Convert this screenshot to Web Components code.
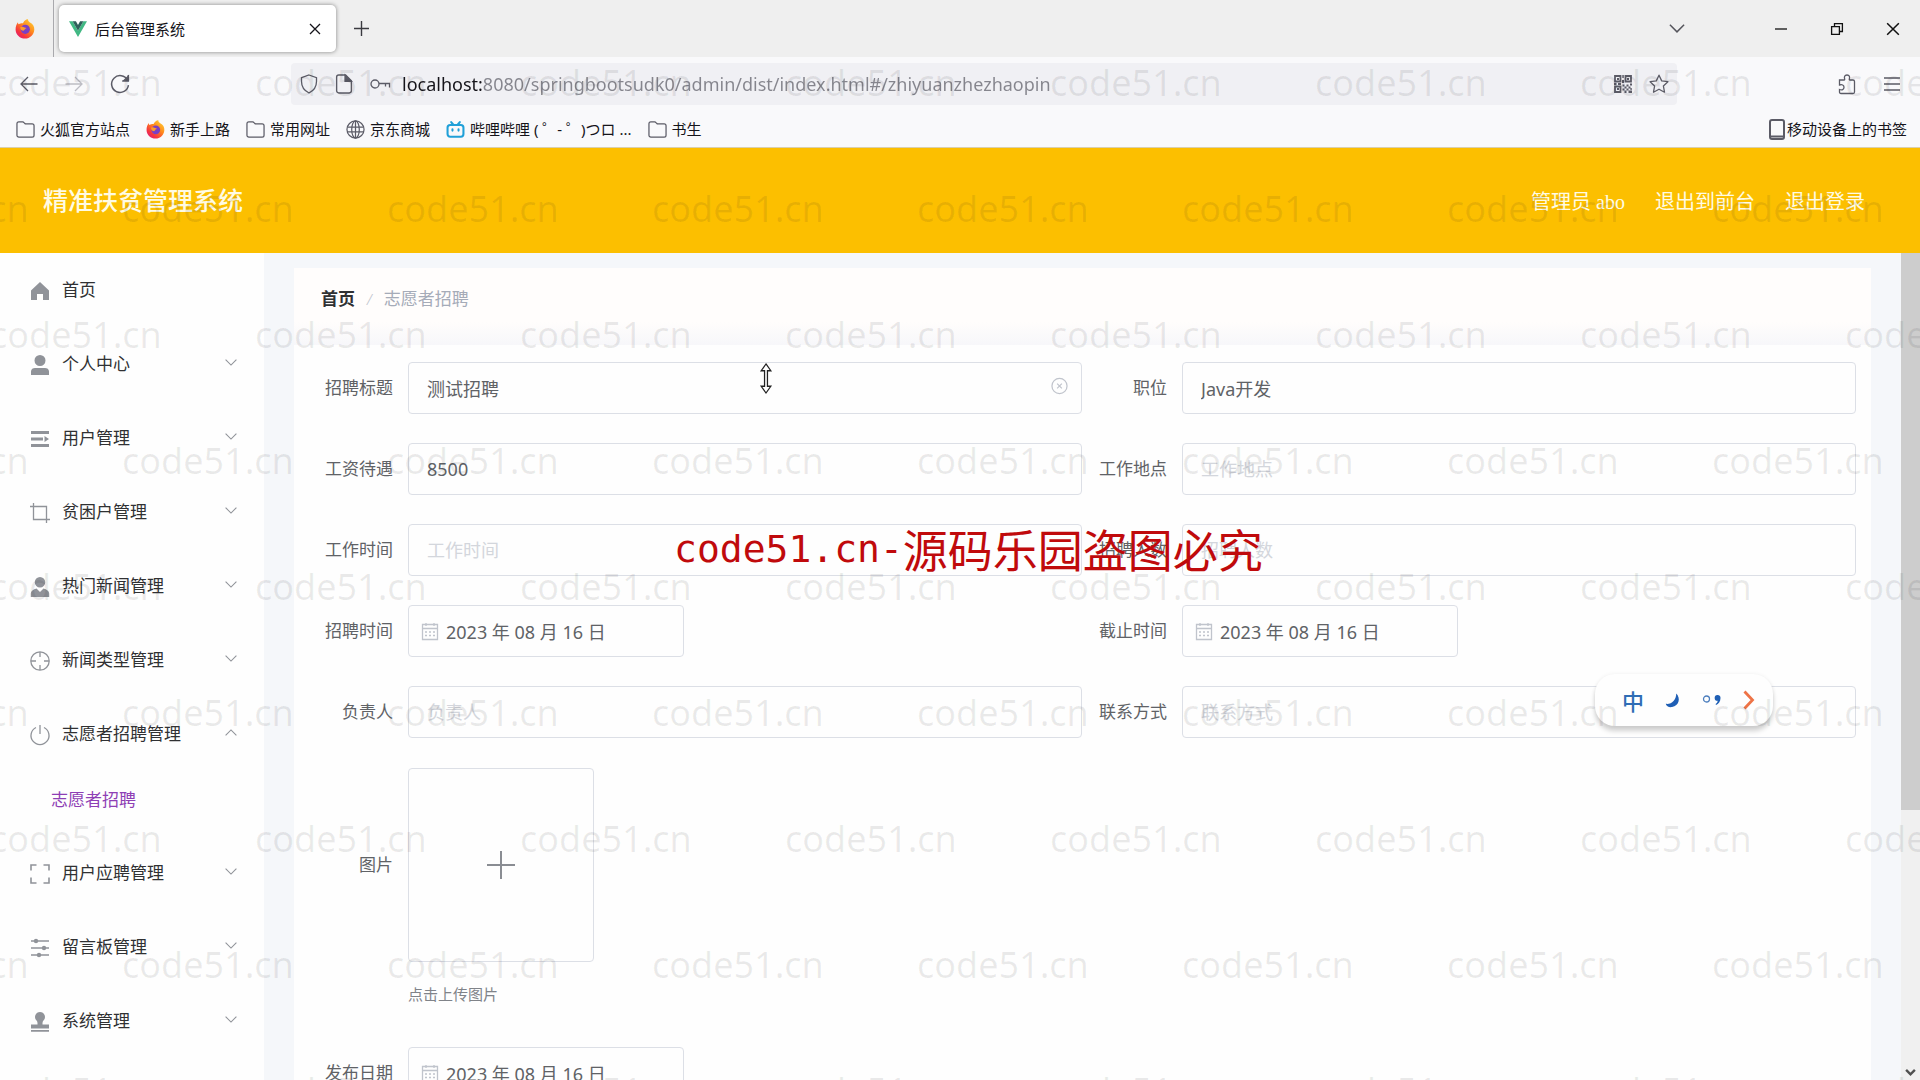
<!DOCTYPE html>
<html lang="zh-CN">
<head>
<meta charset="utf-8">
<title>后台管理系统</title>
<style>
  html, body { margin: 0; height: 100%; }
  body { overflow: hidden; font-family: "Liberation Serif", "Noto Sans CJK SC", serif; }
</style>
</head>
<body>
<app-window></app-window>

<script>
const UI = '"Noto Sans", "Noto Sans CJK SC", sans-serif';

const ICONS = {
  firefox: ['0 0 20 20', '<defs><linearGradient id="a" x1="1" y1="0" x2="0.2" y2="1"><stop offset="0" stop-color="#ffe03a"/><stop offset=".45" stop-color="#ff8a1c"/><stop offset=".8" stop-color="#f5333f"/><stop offset="1" stop-color="#e01e78"/></linearGradient></defs><g stroke="none"><path fill="url(#a)" d="M10 1.500c1-.9 2-1.300 3-1.200 0 1.500.6 2.100 2 3.200C18 5 19.500 7.500 19.300 10.800 19 15.800 15 19.600 10 19.600S.7 15.700.6 10.700C.5 7.500 1.500 5 3 3.200c0 1 .2 1.500.6 2C5.500 4.300 6.500 4 8 4.200 8.500 3 9 2.300 10 1.500z"/><circle cx="10.300" cy="10.300" r="4.600" fill="#7a3fc4"/><path fill="#ff9a2a" d="M5.500 8c1.200-.6 2.800-.4 4 .5 1 .1 1.600.4 2 1-1 .1-1.700.5-2 1.200-.3.900-1.200 1.200-2.300.900C5.700 11 5 9.500 5.500 8z"/></g>'],
  vue: ['0 0 20 18', '<g stroke="none"><path fill="#41b883" d="M0 .5h4L10 11 16 .5h4L10 17.800z"/><path fill="#2f5f5a" d="M4 .5h3.700L10 4.500 12.300.5H16L10 11z"/></g>'],
  close: ['0 0 12 12', '<path d="M1 1l10 10M11 1L1 11"/>'],
  plus: ['0 0 14 14', '<path d="M7 0v14M0 7h14"/>'],
  down: ['0 0 14 8', '<path d="M.7.7L7 7l6.300-6.300"/>'],
  up: ['0 0 14 8', '<path d="M.7 7.300L7 1l6.300 6.300"/>'],
  min: ['0 0 12 12', '<path d="M0 6h12"/>'],
  restore: ['0 0 12 12', '<path d="M.6 3.600h7.800v7.800H.6zM3.500 3.500V.6h7.900v7.900H8.500"/>'],
  back: ['0 0 18 16', '<path d="M17.500 8H1.500M8 1L1 8l7 7"/>'],
  forward: ['0 0 18 16', '<path d="M.5 8h16M10 1l7 7-7 7"/>'],
  reload: ['0 0 18 18', '<path d="M15.800 5.500A7.600 7.600 0 1 0 16.600 10M16.500.8v5.400h-5.400"/><path d="M16.500 2v4.200h-4.200z" fill="currentColor"/>'],
  shield: ['0 0 18 20', '<path d="M9 1l7.500 2.700v3.800C16.500 12.500 14 16.500 9 19 4 16.500 1.500 12.500 1.500 7.500V3.700z"/>'],
  page: ['0 0 16 19', '<path d="M3 1h6.500L15 6.500V16a2 2 0 0 1-2 2H3a2 2 0 0 1-2-2V3a2 2 0 0 1 2-2z"/><path d="M9 1v6h6z" fill="currentColor"/>'],
  key: ['0 0 20 12', '<circle cx="5" cy="6" r="4"/><path d="M9 5.500h10.500v4M15.500 5.500v3"/>'],
  qr: ['0 0 18 18', '<path stroke-width="1.800" d="M1 1h5.500v5.500H1zM11.500 1H17v5.500h-5.500zM1 11.500h5.500V17H1z"/><path fill="currentColor" stroke="none" d="M3 3h2v2H3zM13 3h2v2h-2zM3 13h2v2H3zM8.300 0h1.500v3H8.300zM8 5h2v3H8zM0 8h2.500v2H0zM4 8h3v2H4zM8.500 9.500h2v2h-2zM10.500 11.500h2v2h-2zM12.500 9.500h2v2h-2zM14.500 11.500h2v2h-2zM16 8.500h2v2h-2zM8.500 13.500h2v2h-2zM12.500 13.500h2v2h-2zM10.500 15.500h2V18h-2zM14.500 15.500h3.500V18h-3.500zM16.200 13.200H18v1.500h-1.800z"/>'],
  star: ['0 0 20 20', '<path stroke-linejoin="round" d="M10 1.200l2.700 5.700 6.200.8-4.500 4.300 1.100 6.200-5.500-3-5.500 3 1.100-6.200L1.100 7.700l6.200-.8z"/>'],
  puzzle: ['0 0 18 21', '<path d="M1.500 6h4.700c.4 0 .6-.4.500-.8C6 3 6.500 1 9 1s3 2 2.300 4.200c-.1.400.1.800.5.800H15c1 0 1.500.5 1.500 1.500V18c0 1-.5 1.500-1.500 1.500H3c-1 0-1.500-.5-1.500-1.500v-2.500c2.500.8 4.500.2 4.500-2.200s-2-3-4.500-2.300z"/>'],
  menu: ['0 0 16 14', '<path d="M0 1h16M0 7h16M0 13h16"/>'],
  folder: ['0 0 20 18', '<path d="M3 1h4c.7 0 1 .2 1.400.7L9.700 3H17a2 2 0 0 1 2 2v10a2 2 0 0 1-2 2H3a2 2 0 0 1-2-2V3a2 2 0 0 1 2-2z"/>'],
  globe: ['0 0 20 20', '<circle cx="10" cy="10" r="9"/><ellipse cx="10" cy="10" rx="4" ry="9"/><path d="M1.500 7.500h17M1.500 12.500h17M10 1v18"/>'],
  bili: ['0 0 22 20', '<g stroke="#20a0d8" stroke-width="2.400" stroke-linecap="round"><rect x="1.800" y="4.800" width="18.400" height="13.500" rx="3"/><path d="M6 1.500l2.500 3M16 1.500l-2.500 3M7.500 9.800v1.500M14.500 9.800v1.500"/></g>'],
  phone: ['0 0 16 21', '<rect x="1" y="1" width="14" height="19" rx="2" stroke-width="2"/><path stroke-width="2" d="M1 17.500h14"/>'],
  home: ['0 0 20 20', '<path fill="currentColor" stroke="none" d="M10 1L1 9.500V19h6v-6h6v6h6V9.500z"/>'],
  user: ['0 0 20 20', '<path fill="currentColor" stroke="none" d="M10 0a5.500 5.500 0 1 1 0 11 5.500 5.500 0 0 1 0-11zM1 20v-3.500C1 14 3 13 5 13h10c2 0 4 1 4 3.500V20z"/>'],
  fold: ['0 0 20 18', '<path fill="currentColor" stroke="none" d="M1 1h18v3H1zM1 7.500h12v3H1zM1 14h18v3H1zM14.500 6l4.500 3-4.500 3z"/>'],
  crop: ['0 0 20 20', '<path d="M0 3.500h16.500V20M3.500 0v16.500H20"/>'],
  suit: ['0 0 20 20', '<path fill="currentColor" stroke="none" d="M10 0a5.200 5.200 0 1 1 0 10.500A5.200 5.200 0 0 1 10 0zM.8 20v-3.500c0-2.500 2.500-4 5.700-5L10 15l3.500-3.500c3.200 1 5.700 2.500 5.700 5V20z"/>'],
  aim: ['0 0 20 20', '<circle cx="10" cy="10" r="9.200"/><path d="M10 1v5M10 14v5M1 10h5M14 10h5"/>'],
  power: ['0 0 20 20', '<path d="M6 2.500a9 9 0 1 0 8 0M10 0v9"/>'],
  full: ['0 0 20 20', '<path stroke-width="1.600" d="M1 6.500V1h5.500M13.500 1H19v5.500M19 13.500V19h-5.500M6.500 19H1v-5.500"/>'],
  sliders: ['0 0 20 20', '<path stroke-width="1.500" d="M1 3h18M1 10h18M1 17h18"/><g fill="currentColor" stroke="none"><circle cx="6" cy="3" r="2.200"/><circle cx="14" cy="10" r="2.200"/><circle cx="9" cy="17" r="2.200"/></g>'],
  stamp: ['0 0 20 20', '<path fill="currentColor" stroke="none" d="M10 0a5 5 0 0 1 3.500 8.500c-1 1-1 2-1 4H19v4H1v-4h6.500c0-2 0-3-1-4A5 5 0 0 1 10 0zM1 18h18v1.800H1z"/>'],
  calendar: ['0 0 16 17', '<path d="M.5 1.500h15v15H.5zM.5 5.500h15M4 0v3M12 0v3"/><path stroke-dasharray="2 2" d="M3 9h10M3 12.500h10"/>'],
  clear: ['0 0 18 18', '<circle cx="9" cy="9" r="8"/><path d="M6.500 6.500l5 5M11.500 6.500l-5 5"/>'],
  bigplus: ['0 0 28 28', '<path stroke-width="2" d="M14 0v28M0 14h28"/>'],
  moon: ['0 0 16 16', '<path fill="#1f5fb5" stroke="none" d="M12 .5c5 5 3 13-4.500 14.500C4 15.500 1.500 14 .8 11.500 6.500 12.500 12 8 12 .5z"/>'],
  punct: ['0 0 20 12', '<circle cx="4.500" cy="5" r="3" stroke="#4d7fbe"/><path fill="#1f5fb5" stroke="none" d="M15.500 1a2.800 2.800 0 0 1 3 3c0 3.500-2 6-4.500 7l-.4-1c1.500-.8 2-2 2-3.200A2.800 2.800 0 0 1 15.500 1z"/>'],
  next: ['0 0 12 20', '<path stroke="#ee7346" stroke-width="2.800" d="M1.500 1.500L9.500 10l-8 8.500"/>'],
  resize: ['0 0 14 32', '<path fill="#fff" stroke="#222" d="M7 1l5 7H8.500v16H12l-5 7-5-7h3.500V8H2z"/>'],
  scrolldown: ['0 0 12 8', '<path stroke-width="2.800" d="M1 1l5 5 5-5"/>']
};

function define(name, css, html) {
  customElements.define(name, class extends HTMLElement {
    constructor() {
      super();
      const body = typeof html === 'function' ? html(this) : html;
      this.attachShadow({ mode: 'open' }).innerHTML = `<style>*{box-sizing:border-box}${css}</style>${body}`;
    }
  });
}

define('ui-icon', `
  :host { display: inline-flex; flex: none; width: 18px; height: 18px; align-items: center; justify-content: center; }
  svg { width: 100%; height: 100%; overflow: visible; fill: none; stroke: currentColor; stroke-width: 1.3px; }
`, el => {
  const [box, art] = ICONS[el.getAttribute('name')];
  return `<svg viewBox="${box}" aria-hidden="true">${art}</svg>`;
});

define('tab-strip', `
  :host { display: flex; align-items: center; height: 57px; background: #efefef; color: #3a3a40; font: 15px/20px ${UI}; }
  button { border: 0; padding: 0; background: none; color: inherit; display: flex; align-items: center; justify-content: center; }
  .home { width: 54px; height: 100%; padding-right: 4px; display: flex; align-items: center; justify-content: center; border-right: 1px solid #a9a9ad; }
  .home ui-icon { width: 20px; height: 20px; }
  .tab { display: flex; align-items: center; gap: 8px; width: 277px; height: 47px; margin-left: 5px; padding: 0 14px 0 10px; background: #fff; border-radius: 5px; box-shadow: 0 0 4px rgba(0,0,0,.45); color: #15141a; }
  .tab span { flex: 1; }
  .tab button { width: 14px; }
  .s12 { width: 12px; height: 12px; }
  .new { width: 50px; }
  .new ui-icon { width: 15px; height: 15px; }
  .win { margin-left: auto; display: flex; align-items: center; padding-right: 13px; color: #111; }
  .win button { width: 28px; height: 28px; margin-left: 28px; }
  .win .list { margin-right: 48px; color: #55555c; }
  .list ui-icon { width: 16px; height: 9px; }
  .win ui-icon.x { width: 14px; height: 14px; }
`, `
  <div class="home"><ui-icon name="firefox"></ui-icon></div>
  <div class="tab"><ui-icon name="vue"></ui-icon><span>后台管理系统</span><button aria-label="关闭标签页"><ui-icon class="s12" name="close"></ui-icon></button></div>
  <button class="new" aria-label="新建标签页"><ui-icon name="plus"></ui-icon></button>
  <div class="win">
    <button class="list" aria-label="列出标签页"><ui-icon name="down"></ui-icon></button>
    <button aria-label="最小化"><ui-icon class="s12" name="min"></ui-icon></button>
    <button aria-label="还原"><ui-icon class="s12" name="restore"></ui-icon></button>
    <button aria-label="关闭"><ui-icon class="x" name="close"></ui-icon></button>
  </div>
`);

define('nav-bar', `
  :host { display: flex; align-items: center; height: 54px; padding: 0 20px; background: #f9f9fb; color: #5b5b66; font: 18px/24px ${UI}; }
  button { border: 0; padding: 0; background: none; color: inherit; display: flex; }
  .nav { flex: 271 1 0; min-width: 180px; display: flex; align-items: center; gap: 27px; }
  .nav .off { color: #bdbdc4; }
  .reload { width: 20px; height: 20px; }
  .url { flex: 1369 1 0; display: flex; align-items: center; gap: 17px; height: 42px; padding: 0 8px 0 9px; background: #f0f0f4; border-radius: 4px; }
  .url ui-icon { height: 20px; }
  .url .key { width: 20px; height: 12px; }
  input { flex: 1; min-width: 0; height: 30px; border: 0; padding: 0; margin-left: -5px; outline: 0; font: inherit; color: transparent;
    background: linear-gradient(90deg, #15141a 81px, #85858d 81px); -webkit-background-clip: text; background-clip: text; }
  .star { width: 20px; }
  .end { flex: 223 1 0; display: flex; justify-content: flex-end; align-items: center; gap: 28px; }
  .end .puz { width: 18px; height: 21px; }
  .end .menu { width: 16px; height: 14px; }
`, `
  <div class="nav">
    <button aria-label="后退"><ui-icon name="back"></ui-icon></button>
    <button class="off" aria-label="前进"><ui-icon name="forward"></ui-icon></button>
    <button aria-label="刷新"><ui-icon class="reload" name="reload"></ui-icon></button>
  </div>
  <div class="url">
    <ui-icon name="shield"></ui-icon><ui-icon name="page"></ui-icon><ui-icon class="key" name="key"></ui-icon>
    <input aria-label="地址" value="localhost:8080/springbootsudk0/admin/dist/index.html#/zhiyuanzhezhaopin">
    <ui-icon name="qr"></ui-icon><ui-icon class="star" name="star"></ui-icon>
  </div>
  <div class="end">
    <button aria-label="扩展"><ui-icon class="puz" name="puzzle"></ui-icon></button>
    <button aria-label="菜单"><ui-icon class="menu" name="menu"></ui-icon></button>
  </div>
`);

define('bookmark-link', `
  :host { display: block; }
  a { display: flex; align-items: center; gap: 5px; color: #15141a; text-decoration: none; white-space: pre; }
  ui-icon { width: 19px; height: 19px; color: #5b5b66; }
  :host([tight]) a { gap: 2px; }
  :host([tight]) ui-icon { width: 16px; height: 21px; }
`, el => `<a href="#"><ui-icon name="${el.getAttribute('icon')}"></ui-icon><slot></slot></a>`);

define('bookmark-bar', `
  :host { display: flex; align-items: center; gap: 16px; height: 37px; padding: 0 13px 0 16px; background: #f9f9fb; border-bottom: 1px solid #d9cfae; font: 15px/20px ${UI}; }
  [tight] { margin-left: auto; }
`, `
  <bookmark-link icon="folder">火狐官方站点</bookmark-link>
  <bookmark-link icon="firefox">新手上路</bookmark-link>
  <bookmark-link icon="folder">常用网址</bookmark-link>
  <bookmark-link icon="globe">京东商城</bookmark-link>
  <bookmark-link icon="bili">哔哩哔哩 ( ゜- ゜)つロ ...</bookmark-link>
  <bookmark-link icon="folder">书生</bookmark-link>
  <bookmark-link icon="phone" tight>移动设备上的书签</bookmark-link>
`);

define('site-header', `
  :host { display: flex; align-items: center; height: 105px; padding: 2px 55px 0 43px; background: #fcbf00; color: #fffbe3; font-size: 20px; line-height: 28px; }
  h1 { margin: 0; flex: 1; font-size: 25px; line-height: 36px; font-weight: 500; }
  nav { display: flex; gap: 30px; }
  a { color: inherit; text-decoration: none; }
`, `
  <h1>精准扶贫管理系统</h1>
  <nav><span>管理员 abo</span><a href="#">退出到前台</a><a href="#">退出登录</a></nav>
`);

define('menu-entry', `
  :host { display: block; }
  button { display: flex; align-items: center; gap: 12px; width: 100%; height: 74px; padding: 0 27px 0 30px; border: 0; background: none; color: #303133; font: 17px/24px "Liberation Serif", "Noto Sans CJK SC", serif; text-align: left; }
  span { flex: 1; }
  ui-icon { width: 20px; height: 20px; color: #909399; }
  .arrow { width: 12px; height: 7px; margin-bottom: 6px; }
  ::slotted(a) { display: block; height: 65px; padding: 17px 0 0 51px; font-size: 17px; line-height: 24px; color: #8e3fb5; text-decoration: none; }
`, el => {
  const arrow = el.getAttribute('arrow');
  return `<button><ui-icon name="${el.getAttribute('icon')}"></ui-icon><span>${el.getAttribute('label')}</span>${arrow ? `<ui-icon class="arrow" name="${arrow}"></ui-icon>` : ''}</button><slot></slot>`;
});

define('side-menu', `
  :host { display: block; width: 264px; flex: none; padding-top: 1px; background: #fefefe; overflow: hidden; }
`, `<nav>
  <menu-entry icon="home" label="首页"></menu-entry>
  <menu-entry icon="user" label="个人中心" arrow="down"></menu-entry>
  <menu-entry icon="fold" label="用户管理" arrow="down"></menu-entry>
  <menu-entry icon="crop" label="贫困户管理" arrow="down"></menu-entry>
  <menu-entry icon="suit" label="热门新闻管理" arrow="down"></menu-entry>
  <menu-entry icon="aim" label="新闻类型管理" arrow="down"></menu-entry>
  <menu-entry icon="power" label="志愿者招聘管理" arrow="up"><a href="#">志愿者招聘</a></menu-entry>
  <menu-entry icon="full" label="用户应聘管理" arrow="down"></menu-entry>
  <menu-entry icon="sliders" label="留言板管理" arrow="down"></menu-entry>
  <menu-entry icon="stamp" label="系统管理" arrow="down"></menu-entry>
</nav>`);

define('bread-crumb', `
  :host { display: flex; align-items: center; gap: 12px; height: 77px; padding: 0 27px 13px; background: linear-gradient(#fffdfc 70%, #f7f7fa); font-size: 17px; line-height: 24px; color: #a5abb8; }
  a { color: #303133; font-weight: 700; text-decoration: none; }
  i { color: #c0c4cc; }
`, `<a href="#">首页</a><i>/</i><span>志愿者招聘</span>`);

define('form-field', `
  :host { display: flex; align-items: center; }
  label { width: 100px; flex: none; padding: 2px 15px 0 0; text-align: right; font-size: 17px; line-height: 24px; color: #606266; }
  .box { flex: 1; min-width: 0; display: flex; align-items: center; gap: 8px; height: 52px; padding: 0 13px 0 18px; background: #fefefe; border: 1px solid #dcdfe6; border-radius: 4px; }
  :host([date]) .box { flex: none; width: 276px; padding-left: 13px; }
  input { flex: 1; min-width: 0; height: 30px; border: 0; padding: 0; outline: 0; background: none; color: #606266; font: 18px/28px ${UI}; }
  input::placeholder { color: #d3d6dc; opacity: 1; }
  ui-icon { width: 16px; height: 17px; color: #c0c4cc; }
  .clear { height: 18px; width: 17px; margin-bottom: 4px; }
`, el => {
  const at = n => el.getAttribute(n) || '';
  return `<label for="f">${at('label')}</label><div class="box">${el.hasAttribute('date') ? '<ui-icon name="calendar"></ui-icon>' : ''}
    <input id="f" type="text" value="${at('value')}" placeholder="${at('hint')}">${el.hasAttribute('clearable') ? '<ui-icon class="clear" name="clear"></ui-icon>' : ''}</div>`;
});

define('upload-field', `
  :host { display: grid; grid-template-columns: 100px 1fr; align-items: center; }
  label { padding: 2px 15px 0 0; text-align: right; font-size: 17px; line-height: 24px; color: #606266; }
  button { display: flex; align-items: center; justify-content: center; width: 186px; height: 194px; background: #fefefe; border: 1px solid #dcdfe6; border-radius: 4px; color: #8a8d93; }
  ui-icon { width: 28px; height: 28px; }
  p { grid-column: 2; margin: 21px 0 0; font-size: 15px; line-height: 24px; color: #808389; }
`, `<label for="u">图片</label><button id="u" type="button"><ui-icon name="bigplus"></ui-icon></button><p>点击上传图片</p>`);

define('job-form', `
  :host { display: block; }
  form { display: grid; grid-template-columns: 1fr 1fr; row-gap: 29px; padding: 17px 15px 29px 14px; background: #fefefe; }
  upload-field { grid-column: 1 / -1; padding: 1px 0 11px; }
`, `<form>
  <form-field label="招聘标题" value="测试招聘" clearable></form-field>
  <form-field label="职位" value="Java开发"></form-field>
  <form-field label="工资待遇" value="8500"></form-field>
  <form-field label="工作地点" hint="工作地点"></form-field>
  <form-field label="工作时间" hint="工作时间"></form-field>
  <form-field label="招聘人数" hint="招聘人数"></form-field>
  <form-field label="招聘时间" value="2023 年 08 月 16 日" date></form-field>
  <form-field label="截止时间" value="2023 年 08 月 16 日" date></form-field>
  <form-field label="负责人" hint="负责人"></form-field>
  <form-field label="联系方式" hint="联系方式"></form-field>
  <upload-field></upload-field>
  <form-field label="发布日期" value="2023 年 08 月 16 日" date></form-field>
</form>`);

define('page-scroll', `
  :host { display: flex; flex-direction: column; justify-content: space-between; align-items: center; width: 19px; flex: none; background: #f0f0f0; }
  i { width: 100%; height: 67.3%; background: #cdcdcd; }
  ui-icon { width: 11px; height: 7px; margin-bottom: 4px; color: #505050; }
`, `<i></i><ui-icon name="scrolldown"></ui-icon>`);

define('ime-bar', `
  :host { display: flex; align-items: center; justify-content: space-between; width: 178px; height: 52px; padding: 0 18px 0 27px; background: #fefefe; border-radius: 20px; box-shadow: 0 5px 5px rgba(0,0,0,.18), 0 0 4px rgba(0,0,0,.06); color: #2f6db5; font: 500 22px/28px "Noto Sans CJK SC", sans-serif; }
  .m { width: 15px; height: 15px; } .p { width: 20px; height: 12px; } .n { width: 12px; height: 20px; }
`, `<span>中</span><ui-icon class="m" name="moon"></ui-icon><ui-icon class="p" name="punct"></ui-icon><ui-icon class="n" name="next"></ui-icon>`);

define('water-mark', `
  :host { display: block; overflow: hidden; pointer-events: none; padding-top: 20px; color: rgba(30,30,40,.09); font: 36px/126px "Noto Sans", sans-serif; }
  div { display: flex; height: 126px; margin-left: -10px; }
  div:nth-of-type(even) { margin-left: -143px; }
  span { flex: 0 0 265px; }
`, () => ('<div>' + '<span>code51.cn</span>'.repeat(8) + '</div>').repeat(9));

define('copy-notice', `
  :host { display: flex; align-items: center; color: #c00a0c; font: 45px/60px "Noto Sans CJK SC", sans-serif; white-space: nowrap; pointer-events: none; }
  b { font: 38px/60px "DejaVu Sans Mono", monospace; }
`, `<b>code51.cn-</b><span>源码乐园盗图必究</span>`);

define('app-window', `
  :host { position: relative; display: flex; flex-direction: column; height: 100vh; overflow: hidden; }
  tab-strip, nav-bar, bookmark-bar, site-header { flex: none; }
  .body { flex: 1; min-height: 0; display: flex; background: #f5f7fa; }
  main { flex: 1; min-width: 0; padding: 15px 30px 0; overflow: hidden; }
  water-mark { position: absolute; inset: 0; }
  copy-notice { position: absolute; left: 674px; top: 519px; }
  ime-bar { position: absolute; left: 1595px; top: 674px; }
  .cursor { position: absolute; left: 759px; top: 363px; width: 14px; height: 31px; }
`, `
  <tab-strip></tab-strip>
  <nav-bar></nav-bar>
  <bookmark-bar></bookmark-bar>
  <site-header></site-header>
  <div class="body">
    <side-menu></side-menu>
    <main><bread-crumb></bread-crumb><job-form></job-form></main>
    <page-scroll></page-scroll>
  </div>
  <ime-bar></ime-bar>
  <water-mark></water-mark>
  <copy-notice></copy-notice>
  <ui-icon class="cursor" name="resize"></ui-icon>
`);
</script>
</body>
</html>
